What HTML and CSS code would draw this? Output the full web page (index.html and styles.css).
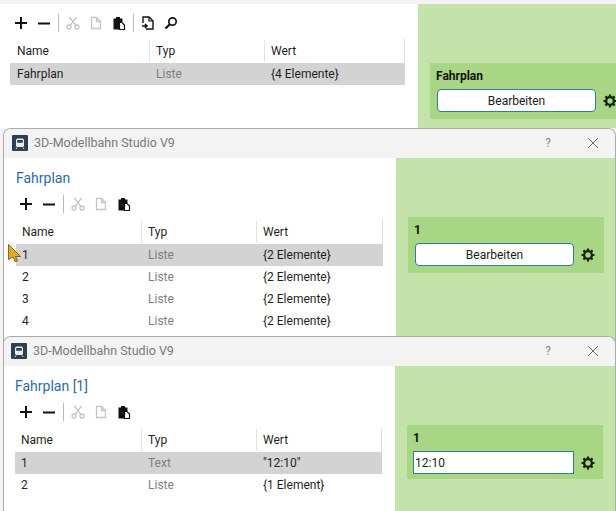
FILE: index.html
```html
<!DOCTYPE html>
<html lang="de">
<head>
<meta charset="utf-8">
<title>3D-Modellbahn Studio V9</title>
<link rel="stylesheet" href="styles.css">
</head>
<body>
<svg class="defs" width="0" height="0" aria-hidden="true">
  <symbol id="plus" viewBox="0 0 14 14"><path d="M7 1v12M1 7h12" fill="none" stroke="currentColor" stroke-width="2"/></symbol>
  <symbol id="minus" viewBox="0 0 14 14"><path d="M1 7.500h12" fill="none" stroke="currentColor" stroke-width="2"/></symbol>
  <symbol id="cut" viewBox="0 0 14 14"><g fill="none" stroke="currentColor" stroke-width="1.300"><circle cx="3" cy="11" r="2"/><circle cx="11" cy="11" r="2"/><path d="M4.200 9.400 10.500 1M9.800 9.400 3.500 1"/></g></symbol>
  <symbol id="copy" viewBox="0 0 14 14"><path d="M2.500 1.500h5l4 4v7h-9zM7.500 1.500v4h4" fill="none" stroke="currentColor" stroke-width="1.300"/></symbol>
  <symbol id="paste" viewBox="0 0 14 14"><path d="M1.500 2.500h2.500V1h4v1.500h2.500V6H7v7.500H1.500z" fill="currentColor"/><path d="M7.500 6.500h2.500l2.500 2.500v4.500h-5z" fill="#fff" stroke="currentColor" stroke-width="1.200"/></symbol>
  <symbol id="import" viewBox="0 0 14 14"><path d="M2 7V1h6l4 4v8H5" fill="none" stroke="currentColor" stroke-width="1.400"/><path d="M8 1v4h4" fill="none" stroke="currentColor" stroke-width="1.200"/><path d="M1 10h5M4 8l2 2-2 2" fill="none" stroke="currentColor" stroke-width="1.500"/></symbol>
  <symbol id="search" viewBox="0 0 14 14"><circle cx="8.500" cy="5.500" r="3.700" fill="none" stroke="currentColor" stroke-width="1.700"/><path d="M5.800 8.200 1.500 12.500" fill="none" stroke="currentColor" stroke-width="2.200"/></symbol>
  <symbol id="gear" viewBox="0 0 14 14"><circle cx="7" cy="7" r="3.900" fill="none" stroke="currentColor" stroke-width="2.400"/><path d="M7 .5v13M.5 7h13M2.400 2.400l9.200 9.200M11.600 2.400l-9.200 9.200" fill="none" stroke="currentColor" stroke-width="2.200" stroke-dasharray="2.400 8.200"/></symbol>
  <symbol id="train" viewBox="0 0 16 16"><rect width="16" height="16" rx="1" fill="#2f3f4f"/><path d="M5 3.500h6l1 1.500v6l-1 1H5l-1-1V5z" fill="#e8ecef"/><path d="M5.200 5h5.600v2.800H5.200z" fill="#2f3f4f"/><path d="M5 12.500 4 14M11 12.500 12 14" stroke="#e8ecef" stroke-width="1"/></symbol>
</svg>

<section class="window window-base">
  <div class="body">
    <div class="main">
      <div class="toolbar">
        <svg class="icon"><use href="#plus"/></svg>
        <svg class="icon"><use href="#minus"/></svg>
        <span class="divider"></span>
        <svg class="icon off"><use href="#cut"/></svg>
        <svg class="icon off"><use href="#copy"/></svg>
        <svg class="icon"><use href="#paste"/></svg>
        <span class="divider"></span>
        <svg class="icon"><use href="#import"/></svg>
        <svg class="icon"><use href="#search"/></svg>
      </div>
      <div class="table">
        <div class="row head"><span class="c1">Name</span><span class="c2">Typ</span><span class="c3">Wert</span></div>
        <div class="row sel"><span class="c1">Fahrplan</span><span class="c2">Liste</span><span class="c3">{4 Elemente}</span></div>
      </div>
    </div>
    <aside class="side">
      <div class="panel">
        <div class="label">Fahrplan</div>
        <div class="field"><button class="btn">Bearbeiten</button><svg class="gear"><use href="#gear"/></svg></div>
      </div>
    </aside>
  </div>
</section>

<section class="window window-two">
  <header class="titlebar">
    <svg class="app"><use href="#train"/></svg>
    <span class="app-title">3D-Modellbahn Studio V9</span>
    <span class="help">?</span>
    <svg class="close" viewBox="0 0 12 12"><path d="M1 1l10 10M11 1 1 11" fill="none" stroke="currentColor"/></svg>
  </header>
  <div class="body">
    <div class="main">
      <h2 class="heading">Fahrplan</h2>
      <div class="toolbar">
        <svg class="icon"><use href="#plus"/></svg>
        <svg class="icon"><use href="#minus"/></svg>
        <span class="divider"></span>
        <svg class="icon off"><use href="#cut"/></svg>
        <svg class="icon off"><use href="#copy"/></svg>
        <svg class="icon"><use href="#paste"/></svg>
      </div>
      <div class="table">
        <div class="row head"><span class="c1">Name</span><span class="c2">Typ</span><span class="c3">Wert</span></div>
        <div class="row sel"><span class="c1">1</span><span class="c2">Liste</span><span class="c3">{2 Elemente}</span></div>
        <div class="row"><span class="c1">2</span><span class="c2">Liste</span><span class="c3">{2 Elemente}</span></div>
        <div class="row"><span class="c1">3</span><span class="c2">Liste</span><span class="c3">{2 Elemente}</span></div>
        <div class="row"><span class="c1">4</span><span class="c2">Liste</span><span class="c3">{2 Elemente}</span></div>
      </div>
    </div>
    <aside class="side">
      <div class="panel">
        <div class="label">1</div>
        <div class="field"><button class="btn">Bearbeiten</button><svg class="gear"><use href="#gear"/></svg></div>
      </div>
    </aside>
  </div>
</section>

<section class="window window-three">
  <header class="titlebar">
    <svg class="app"><use href="#train"/></svg>
    <span class="app-title">3D-Modellbahn Studio V9</span>
    <span class="help">?</span>
    <svg class="close" viewBox="0 0 12 12"><path d="M1 1l10 10M11 1 1 11" fill="none" stroke="currentColor"/></svg>
  </header>
  <div class="body">
    <div class="main">
      <h2 class="heading">Fahrplan [1]</h2>
      <div class="toolbar">
        <svg class="icon"><use href="#plus"/></svg>
        <svg class="icon"><use href="#minus"/></svg>
        <span class="divider"></span>
        <svg class="icon off"><use href="#cut"/></svg>
        <svg class="icon off"><use href="#copy"/></svg>
        <svg class="icon"><use href="#paste"/></svg>
      </div>
      <div class="table">
        <div class="row head"><span class="c1">Name</span><span class="c2">Typ</span><span class="c3">Wert</span></div>
        <div class="row sel"><span class="c1">1</span><span class="c2">Text</span><span class="c3">"12:10"</span></div>
        <div class="row"><span class="c1">2</span><span class="c2">Liste</span><span class="c3">{1 Element}</span></div>
      </div>
    </div>
    <aside class="side">
      <div class="panel">
        <div class="label">1</div>
        <div class="field"><input class="input" value="12:10"><svg class="gear"><use href="#gear"/></svg></div>
      </div>
    </aside>
  </div>
</section>

<svg class="cursor" viewBox="0 0 14 18"><path d="M.5.500 12.500 12.500H7.500L9.500 17 7 17.500 5 13 .5 15.500z" fill="#e9a91f" stroke="#4a3a10" stroke-width=".7"/></svg>
</body>
</html>
```
FILE: styles.css
```css
* { box-sizing: border-box; }
html, body {
  margin: 0;
  width: 616px;
  height: 511px;
  overflow: hidden;
  background: #f3f3f3;
  font-family: Roboto, "Open Sans", "Liberation Sans", sans-serif;
  font-size: 12px;
  color: #1c1c1c;
}
.defs { position: absolute; }

.window {
  position: absolute;
  display: flex;
  flex-direction: column;
  background: #fff;
}
.window-base { left: 0; top: 4px; width: 616px; height: 124px; }
.window-two {
  left: 3px; top: 128px; width: 613px; height: 220px;
  border: 1px solid #a9aca6;
  border-bottom: 0;
  border-radius: 8px 8px 0 0;
  overflow: hidden;
}
.window-three {
  left: 3px; top: 336px; width: 613px; height: 175px;
  border: 1px solid #a9aca6;
  border-bottom: 0;
  border-radius: 8px 8px 0 0;
  overflow: hidden;
}

.titlebar {
  flex: none;
  height: 29px;
  display: flex;
  align-items: center;
  padding: 0 0 2px 8px;
  background: #f3f3f3;
  color: #7a7a7a;
}
.window-three .titlebar { padding-left: 7px; }
.app { width: 16px; height: 16px; flex: none; }
.app-title { margin-left: 6px; font-size: 12.5px; flex: 1; }
.help { width: 12px; text-align: center; color: #8b8b8b; }
.close { width: 12px; height: 12px; margin: 0 16px 0 33px; color: #6e6e6e; }

.body { flex: 1; display: flex; min-height: 0; }
.main { flex: none; width: 392px; padding: 0 12px; }
.window-base .main { width: 418px; padding: 0 10px; }
.window-three .main { width: 391px; padding: 0 12px 0 11px; }

.side {
  flex: 1;
  background: #c3e3ab;
  padding: 59px 0 0 12px;
}

.heading {
  margin: 11px 0 0;
  height: 21px;
  font-size: 14px;
  font-weight: 400;
  line-height: 19px;
  color: #2b6ca3;
}

.toolbar {
  height: 26px;
  margin-top: 1px;
  display: flex;
  align-items: center;
  gap: 9px;
  padding-left: 4px;
}
.window-base .toolbar { margin-top: 6px; margin-bottom: 3px; }
.window-two .toolbar { padding-left: 3px; margin-bottom: 3px; }
.window-three .toolbar { margin-top: 1px; margin-bottom: 3px; }
.icon { width: 14px; height: 14px; flex: none; color: #111; }
.icon.off { color: #c4c4c4; }
.divider { width: 1px; height: 18px; background: #b9b9b9; margin: 0 -2px; }

.table { width: 367px; }
.window-base .table { width: 395px; }
.row {
  display: flex;
  height: 22px;
  align-items: center;
  line-height: 22px;
  color: #1f1f1f;
}
.row.head { height: 24px; border-right: 1px solid #dcdcdc; }
.row.sel { background: #d3d3d3; border-radius: 1px; }
.c1 { width: 125px; padding-left: 6px; }
.c2 { width: 115px; padding-left: 7px; color: #7f7f7f; }
.c3 { flex: 1; padding-left: 7px; }
.window-base .c1 { width: 139px; padding-left: 7px; }
.window-three .c1 { width: 126px; }
.head .c1, .head .c2, .head .c3 { color: #1f1f1f; }
.head .c2, .head .c3 { border-left: 1px solid #e3e3e3; padding-left: 6px; }

.panel {
  width: 196px;
  height: 56px;
  background: #a8d684;
  padding: 5px 7px 0 6px;
}
.window-three .panel { height: 54px; }
.label { font-weight: 700; color: #111; line-height: 17px; height: 21px; }
.field { display: flex; align-items: center; padding-left: 1px; }
.btn {
  width: 159px;
  height: 23px;
  padding: 0;
  font: inherit;
  color: #1c1c1c;
  background: #fff;
  border: 1px solid #2f7f8f;
  border-radius: 4px;
}
.input {
  width: 161px;
  height: 23px;
  padding: 0 1px;
  font: inherit;
  color: #1c1c1c;
  background: #fff;
  border: 1px solid #2f7f8f;
  border-radius: 0;
  margin-left: -1px;
}
.gear { width: 14px; height: 14px; margin-left: 7px; color: #16240e; flex: none; }

.cursor { position: absolute; left: 8px; top: 244px; width: 14px; height: 18px; }
```
